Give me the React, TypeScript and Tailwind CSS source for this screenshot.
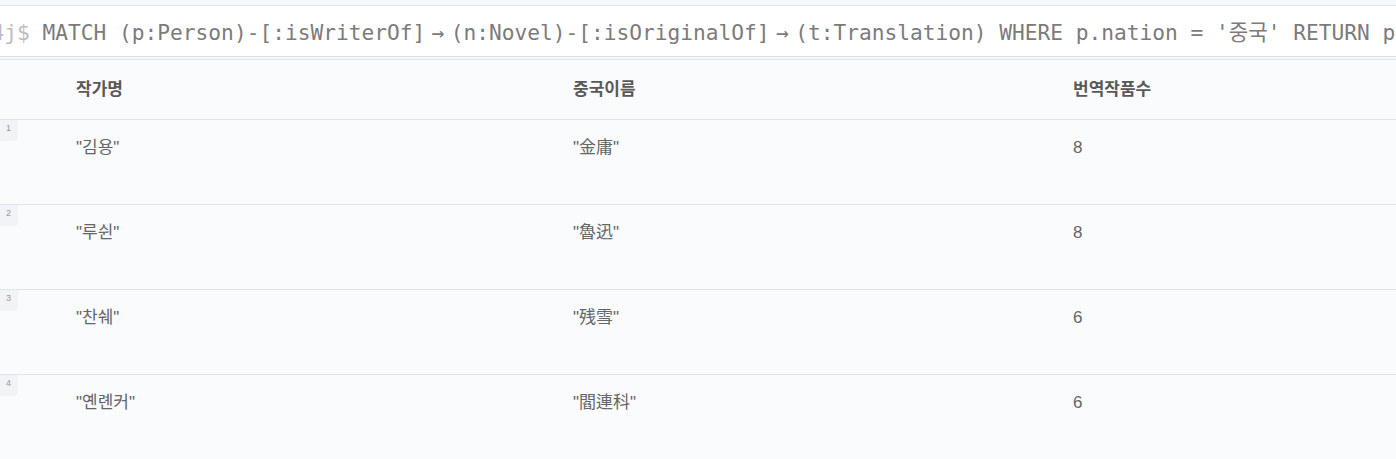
import React from 'react';

const rows = [
  { name: '"김용"', cn: '"金庸"', count: 8 },
  { name: '"루쉰"', cn: '"魯迅"', count: 8 },
  { name: '"찬쉐"', cn: '"残雪"', count: 6 },
  { name: '"옌롄커"', cn: '"閻連科"', count: 6 },
];

const mono = { fontFamily: '"DejaVu Sans Mono", "Noto Sans CJK KR", monospace' };
const sans = { fontFamily: '"Liberation Sans", "Noto Sans CJK KR", sans-serif' };

function Arrow() {
  return <span className="inline-block w-[2ch] text-center">→</span>;
}

export default function App() {
  return (
    <div className="w-[1396px] h-[459px] overflow-hidden bg-[#f9fbfd]" style={sans}>
      {/* query bar */}
      <div className="h-[6px] bg-[#f6f9fc] border-b border-[#dbe5ef]" />
      <div className="h-[51px] bg-white border-b border-[#d9dfe6] flex items-center overflow-hidden pt-[4px]">
        <div className="whitespace-nowrap text-[21.2px] text-[#7b7b7b] -ml-[34px]" style={mono}>
          <span className="text-[#bdbdbd]">eo4j$</span> MATCH (p:Person)-[:isWriterOf]<Arrow />(n:Novel)-[:isOriginalOf]<Arrow />(t:Translation) WHERE p.nation = '중국' RETURN p
        </div>
      </div>
      <div className="h-[3px] bg-[#f6f9fc] border-b border-[#dbe5ef]" />

      {/* header */}
      <div className="h-[60px] grid grid-cols-[497px_500px_1fr] items-center pl-[76px] border-b border-[#dde6f0] text-[17px] font-bold text-[#595959]">
        <div>작가명</div>
        <div>중국이름</div>
        <div>번역작품수</div>
      </div>

      {/* rows */}
      {rows.map((r, i) => (
        <div key={i} className="h-[85px] border-b border-[#dde6f0] flex">
          <div className="w-[76px] shrink-0">
            <div className="w-[18px] h-[21px] bg-[#f1f3f6] rounded-br-[4px] text-[9px] text-[#9a9a9a] pl-[6px] pt-[4px] leading-none">
              {i + 1}
            </div>
          </div>
          <div className="grid grid-cols-[497px_500px_1fr] pt-[15px] text-[17px] text-[#666] w-full">
            <div>{r.name}</div>
            <div>{r.cn}</div>
            <div>{r.count}</div>
          </div>
        </div>
      ))}
    </div>
  );
}
